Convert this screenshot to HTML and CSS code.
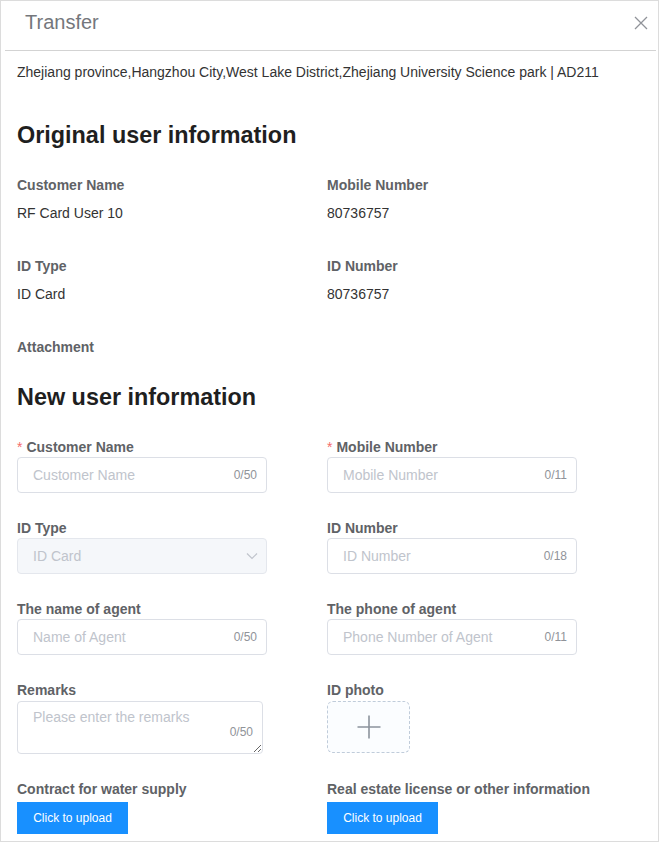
FILE: index.html
```html
<!DOCTYPE html>
<html lang="en">
<head>
<meta charset="utf-8">
<title>Transfer</title>
<link rel="stylesheet" href="styles.css">
</head>
<body>
<div class="dialog">
  <div class="header">
    <span class="title">Transfer</span>
    <svg class="close" width="14" height="14" viewBox="0 0 14 14"><path d="M1 1 L13 13 M13 1 L1 13" stroke="#909399" stroke-width="1.3" fill="none"/></svg>
  </div>
  <div class="body">
    <p class="address">Zhejiang province,Hangzhou City,West Lake District,Zhejiang University Science park | AD211</p>

    <h2 class="section">Original user information</h2>
    <div class="info-grid">
      <div class="info-item"><div class="label">Customer Name</div><div class="value">RF Card User 10</div></div>
      <div class="info-item"><div class="label">Mobile Number</div><div class="value">80736757</div></div>
      <div class="info-item"><div class="label">ID Type</div><div class="value">ID Card</div></div>
      <div class="info-item"><div class="label">ID Number</div><div class="value">80736757</div></div>
      <div class="info-item"><div class="label">Attachment</div></div>
    </div>

    <h2 class="section">New user information</h2>
    <div class="form-grid">
      <div class="form-item">
        <div class="label"><span class="req">*</span>Customer Name</div>
        <div class="input"><span class="ph">Customer Name</span><span class="count">0/50</span></div>
      </div>
      <div class="form-item">
        <div class="label"><span class="req">*</span>Mobile Number</div>
        <div class="input"><span class="ph">Mobile Number</span><span class="count">0/11</span></div>
      </div>
      <div class="form-item">
        <div class="label">ID Type</div>
        <div class="input disabled"><span class="ph">ID Card</span>
          <svg class="arrow" width="12" height="8" viewBox="0 0 12 8"><path d="M1 1.5 L6 6.5 L11 1.5" stroke="#c0c4cc" stroke-width="1.2" fill="none"/></svg>
        </div>
      </div>
      <div class="form-item">
        <div class="label">ID Number</div>
        <div class="input"><span class="ph">ID Number</span><span class="count">0/18</span></div>
      </div>
      <div class="form-item">
        <div class="label">The name of agent</div>
        <div class="input"><span class="ph">Name of Agent</span><span class="count">0/50</span></div>
      </div>
      <div class="form-item">
        <div class="label">The phone of agent</div>
        <div class="input"><span class="ph">Phone Number of Agent</span><span class="count">0/11</span></div>
      </div>
      <div class="form-item">
        <div class="label">Remarks</div>
        <div class="textarea-wrap">
          <textarea class="textarea" placeholder="Please enter the remarks"></textarea>
          <span class="tcount">0/50</span>
        </div>
      </div>
      <div class="form-item">
        <div class="label">ID photo</div>
        <div class="upload-box">
          <svg width="24" height="24" viewBox="0 0 24 24"><path d="M12 0.5 V23.5 M0.5 12 H23.5" stroke="#8c939d" stroke-width="1.6" fill="none"/></svg>
        </div>
      </div>
      <div class="form-item">
        <div class="label">Contract for water supply</div>
        <button class="btn" type="button">Click to upload</button>
      </div>
      <div class="form-item">
        <div class="label">Real estate license or other information</div>
        <button class="btn" type="button">Click to upload</button>
      </div>
    </div>
  </div>
</div>
</body>
</html>
```
FILE: styles.css
```css
* { box-sizing: border-box; }
html, body { margin: 0; padding: 0; background: #fff; }
body { font-family: "Liberation Sans", Arial, sans-serif; color: #333; }

.dialog {
  width: 659px;
  height: 842px;
  border: 1px solid #dcdcdc;
  overflow: hidden;
  background: #fff;
}

.header {
  height: 50px;
  margin-left: 4px;
  margin-right: 2px;
  border-bottom: 1px solid #d3d3d3;
  display: flex;
  align-items: flex-start;
  justify-content: space-between;
  padding: 9px 8px 0 20px;
}
.title { font-size: 20px; line-height: 24px; color: #74777c; }
.close { margin-top: 6px; }

.body { padding: 11px 16px 0 16px; }

.address { margin: 0; font-size: 14px; line-height: 20px; color: #333; }

.section {
  margin: 38px 0 0 0;
  font-size: 23.4px;
  line-height: 30px;
  font-weight: bold;
  color: #1f1f1f;
}
.section + .info-grid, .section + .form-grid { margin-top: 25px; }
.info-grid + .section { margin-top: 25px; }

.info-grid {
  display: grid;
  grid-template-columns: 310px 310px;
  row-gap: 33px;
}
.label { font-size: 14px; line-height: 20px; font-weight: bold; color: #606266; white-space: nowrap; }
.value { margin-top: 8px; font-size: 14px; line-height: 20px; color: #333; }

.form-grid {
  display: grid;
  grid-template-columns: 310px 310px;
  row-gap: 25px;
}
.req { color: #f56c6c; margin-right: 4px; font-weight: normal; }

.input {
  width: 250px;
  height: 36px;
  border: 1px solid #dcdfe6;
  border-radius: 4px;
  display: flex;
  align-items: center;
  justify-content: space-between;
  padding: 0 9px 0 15px;
  background: #fff;
}
.ph { font-size: 14px; color: #c0c4cc; }
.count { font-size: 12px; color: #909399; }
.input.disabled { background: #f5f7fa; border-color: #e4e7ed; padding-right: 8px; }

.textarea-wrap { position: relative; width: 246px; height: 53px; margin-top: 1px; }
.textarea {
  display: block;
  width: 246px;
  height: 53px;
  border: 1px solid #dcdfe6;
  border-radius: 4px;
  padding: 5px 15px;
  font-family: "Liberation Sans", Arial, sans-serif;
  font-size: 14px;
  line-height: 20px;
  color: #333;
  resize: vertical;
  outline: none;
}
.textarea::placeholder { color: #c0c4cc; }
.tcount {
  position: absolute;
  right: 10px;
  bottom: 15px;
  font-size: 12px;
  color: #909399;
  line-height: 14px;
}

.upload-box {
  width: 83px;
  height: 52px;
  margin-top: 1px;
  border: 1px dashed #c0ccda;
  border-radius: 6px;
  background: #fbfdff;
  display: flex;
  align-items: center;
  justify-content: center;
}

.btn {
  display: block;
  margin-top: 3px;
  height: 32px;
  width: 111px;
  padding: 0;
  border: none;
  border-radius: 0;
  background: #1890ff;
  color: #fff;
  font-family: "Liberation Sans", Arial, sans-serif;
  font-size: 12px;
}
```
